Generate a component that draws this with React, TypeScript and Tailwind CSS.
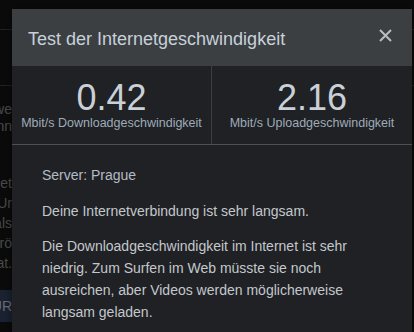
import React from "react";

function Frag({ text, className = "" }: { text: string; className?: string }) {
  return (
    <div className={"w-[12px] overflow-hidden flex justify-end whitespace-nowrap " + className}>
      <span className="shrink-0">{text}</span>
    </div>
  );
}

export default function App() {
  return (
    <div className="relative w-[414px] h-[332px] overflow-hidden bg-[#0b0b0b] font-['Liberation_Sans',Arial,sans-serif]">
      {/* page behind the dialog */}
      <div className="flex flex-col text-[14px] text-[#4c4c4c]">
        <div className="h-[30px] border-b border-[#222222]" />
        <div className="h-[56px] border-b border-[#222222]" />
        <div className="mt-[15px] flex flex-col leading-[17px]">
          <Frag text="Verbindung, we" />
          <Frag text="man kann" />
        </div>
        <div className="mt-[38px] flex flex-col leading-[20px]">
          <Frag text="Internet" />
          <Frag text="Ur" />
          <Frag text="als" />
          <Frag text="grö" />
          <Frag text="hat." />
        </div>
        <div className="mt-[17px] h-[32px] w-[40px] bg-[#1b2232] flex items-center text-[#6a707c] text-[14px]">
          <Frag text="KONFIGUR" />
        </div>
      </div>

      {/* dialog */}
      <div className="absolute left-[12px] top-[9px] w-[400px] bg-[#202124] shadow-[0_0_10px_rgba(0,0,0,0.5)]">
        <div className="h-[57px] bg-[#3c3f42] flex items-center justify-between pl-[16px] pr-[20px]">
          <div className="pt-[2px] text-[18px] leading-[24px] text-[#c7d1da]">
            Test der Internetgeschwindigkeit
          </div>
          <svg width="13" height="13" viewBox="0 0 13 13" className="mb-[5px]">
            <path d="M1 1L12 12M12 1L1 12" stroke="#b9bdc1" strokeWidth="2" />
          </svg>
        </div>
        <div className="grid grid-cols-2 border-b border-[#4d5054]">
          <div className="border-r border-[#3a3d41] flex flex-col items-center pt-[14px] pb-[14px]">
            <div className="text-[36px] leading-[36px] text-[#c9d0d7]">0.42</div>
            <div className="text-[12.5px] leading-[14px] text-[#9eacba]">Mbit/s Downloadgeschwindigkeit</div>
          </div>
          <div className="flex flex-col items-center pt-[14px] pb-[14px]">
            <div className="text-[36px] leading-[36px] text-[#c9d0d7]">2.16</div>
            <div className="text-[12.5px] leading-[14px] text-[#9eacba]">Mbit/s Uploadgeschwindigkeit</div>
          </div>
        </div>
        <div className="px-[30px] pt-[19px] pb-[40px] text-[14px] leading-[22px] text-[#c3c8cd]">
          <p className="mb-[14px] text-[#b4bcc4]">Server: Prague</p>
          <p className="mb-[13px]">Deine Internetverbindung ist sehr langsam.</p>
          <p>
            Die Downloadgeschwindigkeit im Internet ist sehr niedrig. Zum Surfen im Web müsste sie noch
            ausreichen, aber Videos werden möglicherweise langsam geladen.
          </p>
        </div>
      </div>
    </div>
  );
}
